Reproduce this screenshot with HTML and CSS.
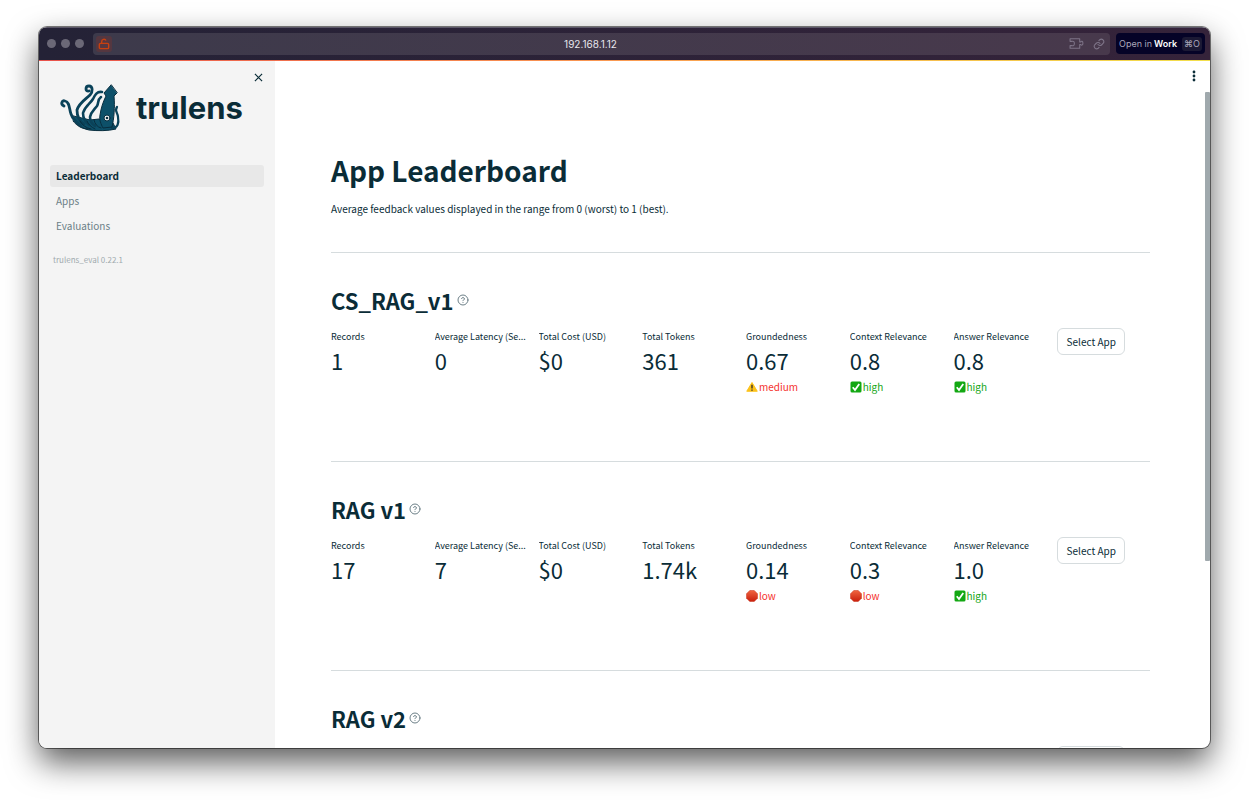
FILE: index.html
```html
<!DOCTYPE html>
<html lang="en">
<head>
<meta charset="utf-8">
<title>App Leaderboard</title>
<link rel="stylesheet" href="styles.css">
</head>
<body>
<svg class="defs" aria-hidden="true">
  <symbol id="help" viewBox="0 0 24 24"><g fill="none" stroke="currentColor" stroke-width="2" stroke-linecap="round" stroke-linejoin="round"><circle cx="12" cy="12" r="10"/><path d="M9.1 9a3 3 0 0 1 5.8 1c0 2-3 3-3 3M12 17v.1"/></g></symbol>
  <symbol id="check" viewBox="0 0 24 24"><rect x="1" y="1" width="22" height="22" rx="3" fill="#13a813"/><path d="M5.500 12.500l4.500 5.500L18.500 6" fill="none" stroke="#fff" stroke-width="3.600"/></symbol>
  <symbol id="warn" viewBox="0 0 24 24"><path d="M12 3L22.500 20.500h-21z" fill="#fcc21b" stroke="#fcc21b" stroke-width="2" stroke-linejoin="round"/><path d="M12 7.500v7.500M12 17v2.500" stroke="#3b3428" stroke-width="2.800"/></symbol>
  <symbol id="stop" viewBox="0 0 24 24"><defs><linearGradient id="red" x2="0" y2="1"><stop stop-color="#f0643f"/><stop offset="1" stop-color="#c91f0c"/></linearGradient></defs><path d="M7.500 1h9L23 7.500v9L16.500 23h-9L1 16.500v-9z" fill="url(#red)" stroke="#c8321c" stroke-width="1"/></symbol>
</svg>
<div class="window">
  <header class="titlebar">
    <div class="lights"><i></i><i></i><i></i></div>
    <div class="address">
      <span class="lock"><svg viewBox="0 0 24 24" width="14" height="14" fill="none" stroke="#c8400f" stroke-width="2.400"><rect x="4" y="11" width="16" height="9" rx="2"/><path d="M8 11V8a4 4 0 0 1 7.500-2"/></svg></span>
      <span class="host">192.168.1.12</span>
      <svg viewBox="0 0 28 24" width="15" height="13" fill="none" stroke="#7d7387" stroke-width="2" stroke-linejoin="round"><path d="M2 8V3h18v6h2c1-2 4-1.500 4 2.500s-3 4.500-4 2.500h-2v7H2v-5h3c4 1 5-1 5-4s-1-5-5-4z"/></svg>
      <svg viewBox="0 0 24 24" width="12" height="12" fill="none" stroke="#7d7387" stroke-width="2.200" stroke-linecap="round"><path d="M10 13a5 5 0 0 0 7.500.5l3-3a5 5 0 0 0-7-7l-1.700 1.700M14 11a5 5 0 0 0-7.500-.5l-3 3a5 5 0 0 0 7 7l1.700-1.700"/></svg>
    </div>
    <button class="open-in">Open in <b>Work</b><kbd>⌘O</kbd></button>
  </header>
  <div class="app">
    <aside class="sidebar">
      <button class="close" aria-label="Close sidebar"><svg viewBox="0 0 10 10" width="9" height="9" stroke="#0a2c37" stroke-width="1.300"><path d="M1 1l8 8M9 1L1 9"/></svg></button>
      <div class="brand">
        <svg viewBox="0 0 68 56" width="68" height="56" fill="none" stroke-linecap="round" stroke-linejoin="round">
          <path d="M16 38c2 7 8 12 17 14 9 1 19 1 27-1l-3-6-14-4-9 1-8-2z" fill="#0d5069" stroke="#082d3e" stroke-width="1"/>
          <g stroke="#0a4259">
            <path d="M8 28C4 26 6 22 9 23c5 1 4 8 6 13 2 6 6 9 10 12" stroke-width="2.800"/>
            <path d="M33 13c-4 1-4-5 0-5 4 0 4 6 1 9-4 4-11 8-13 15 0 6 2 11 7 14" stroke-width="2.800"/>
            <path d="M46 14c-5-1-7 3-9 7-3 5-8 7-10 14 0 5 2 9 6 12" stroke-width="2.600"/>
            <path d="M45 19c-4 3-2 6-4 9-3 4-6 6-7 11 0 4 2 7 5 9" stroke-width="2.600"/>
            <path d="M61 29c-3 4 1 6 1 10 1 6 0 11-6 11" stroke-width="2.200"/>
          </g>
          <path d="M55 7l-7 8 2 3c-3 6-5 12-6 19-1 5 1 9 3 13l9-1c2-8 3-20 2-31l3-3z" fill="#0d5069" stroke="#082d3e" stroke-width="1"/>
          <path d="M17 43c4 5 9 8 15 8M24 43c2 4 6 7 11 8M31 43c1 3 4 6 8 8M38 42c1 4 3 7 7 8" stroke="#082d3e" stroke-width="1"/>
          <circle cx="51" cy="40" r="3" fill="#f4f4f4" stroke="#082d3e" stroke-width="1"/><circle cx="51" cy="40" r="1.300" fill="#082d3e"/>
        </svg>
        <span>trulens</span>
      </div>
      <nav>
        <a href="#" class="current">Leaderboard</a>
        <a href="#">Apps</a>
        <a href="#">Evaluations</a>
      </nav>
      <p class="version">trulens_eval 0.22.1</p>
    </aside>
    <main>
      <button class="menu" aria-label="Main menu"><svg viewBox="0 0 4 12" width="4" height="12" fill="#0a2c37"><circle cx="2" cy="2" r="1.400"/><circle cx="2" cy="6" r="1.400"/><circle cx="2" cy="10" r="1.400"/></svg></button>
      <div class="scrollbar"></div>
      <h1>App Leaderboard</h1>
      <p class="intro">Average feedback values displayed in the range from 0 (worst) to 1 (best).</p>
      <section>
        <h2>CS_RAG_v1 <svg><use href="#help"/></svg></h2>
        <div class="metrics">
          <div class="metric"><span>Records</span><strong>1</strong></div>
          <div class="metric"><span>Average Latency (Se...</span><strong>0</strong></div>
          <div class="metric"><span>Total Cost (USD)</span><strong>$0</strong></div>
          <div class="metric"><span>Total Tokens</span><strong>361</strong></div>
          <div class="metric"><span>Groundedness</span><strong>0.67</strong><em class="bad"><svg><use href="#warn"/></svg>medium</em></div>
          <div class="metric"><span>Context Relevance</span><strong>0.8</strong><em class="good"><svg><use href="#check"/></svg>high</em></div>
          <div class="metric"><span>Answer Relevance</span><strong>0.8</strong><em class="good"><svg><use href="#check"/></svg>high</em></div>
          <div><button class="select">Select App</button></div>
        </div>
      </section>
      <section>
        <h2>RAG v1 <svg><use href="#help"/></svg></h2>
        <div class="metrics">
          <div class="metric"><span>Records</span><strong>17</strong></div>
          <div class="metric"><span>Average Latency (Se...</span><strong>7</strong></div>
          <div class="metric"><span>Total Cost (USD)</span><strong>$0</strong></div>
          <div class="metric"><span>Total Tokens</span><strong>1.74k</strong></div>
          <div class="metric"><span>Groundedness</span><strong>0.14</strong><em class="bad"><svg><use href="#stop"/></svg>low</em></div>
          <div class="metric"><span>Context Relevance</span><strong>0.3</strong><em class="bad"><svg><use href="#stop"/></svg>low</em></div>
          <div class="metric"><span>Answer Relevance</span><strong>1.0</strong><em class="good"><svg><use href="#check"/></svg>high</em></div>
          <div><button class="select">Select App</button></div>
        </div>
      </section>
      <section>
        <h2>RAG v2 <svg><use href="#help"/></svg></h2>
        <div class="metrics"><div class="action"><button class="select" aria-label="Select App"></button></div></div>
      </section>
    </main>
  </div>
</div>
</body>
</html>
```
FILE: styles.css
```css
* { box-sizing: border-box; }
body {
  margin: 0;
  height: 100vh;
  padding: 27px 39px 52px;
  background: #fff;
  color: #0a2c37;
  font: 10px/16px "Noto Sans CJK SC", "Noto Sans", sans-serif;
}
button { font: inherit; color: inherit; border: 0; background: none; padding: 0; }
h1, h2, p { margin: 0; }
.defs { position: absolute; width: 0; height: 0; }
.window {
  height: 100%;
  display: flex;
  flex-direction: column;
  overflow: hidden;
  border-radius: 8px;
  background: #fff;
  box-shadow: 0 0 0 1px rgba(0, 0, 0, .5), 0 14px 32px rgba(0, 0, 0, .65);
}
.titlebar {
  flex: none;
  height: 33px;
  display: flex;
  align-items: center;
  padding: 0 5px 1px 8px;
  background: linear-gradient(90deg, #242236, #35233a);
  border-top: 1px solid #5c5768;
  font-family: Inter, sans-serif;
}
.lights { display: flex; gap: 5px; margin-right: 9px; }
.lights i { width: 9px; height: 9px; border-radius: 50%; background: #6b6877; }
.address {
  flex: 1;
  height: 22px;
  display: flex;
  align-items: center;
  gap: 9px;
  padding: 0 5px 0 3px;
  border-radius: 4px;
  background: linear-gradient(90deg, #3d3a4b, #48394c);
}
.lock { width: 16px; height: 16px; display: grid; place-items: center; border-radius: 3px; background: #553740; }
.host { flex: 1; text-align: center; color: #e8e6ec; }
.open-in {
  height: 21px;
  display: flex;
  align-items: center;
  gap: 2px;
  margin-left: 6px;
  padding: 0 3px;
  border-radius: 4px;
  background: #050327;
  color: #aaa7ba;
  font-size: 9px;
}
.open-in b { color: #fff; font-weight: 600; }
.open-in kbd { margin-left: 3px; padding: 0 2px; border-radius: 3px; background: #1b1934; font: inherit; line-height: 14px; }
.app {
  flex: 1;
  min-height: 0;
  display: flex;
  border-top: 1px solid;
  border-image: linear-gradient(90deg, #e8514b, #fa9b52 50%, #f3e04b) 1;
}
.sidebar { position: relative; flex: none; width: 236px; padding: 17px 11px 16px; background: #f4f4f4; }
.close { position: absolute; top: 12px; right: 12px; width: 9px; height: 10px; display: grid; }
.brand { display: flex; align-items: center; margin: 0 0 31px 6px; height: 56px; }
.brand span { margin-left: 12px; padding-top: 4px; font: 700 31px/40px Inter, sans-serif; }
nav { display: grid; gap: 3px; }
nav a { height: 22px; padding: 0 6px; border-radius: 3px; color: #6c7f87; line-height: 22px; text-decoration: none; }
nav .current { background: #e8e8e8; color: #0a2c37; font-weight: 700; }
.version { margin: 15px 3px; color: #a0aaae; font-size: 8px; }
main { position: relative; flex: 1; min-width: 0; overflow: hidden; padding: 87px 60px 0 56px; }
.menu { position: absolute; top: 9px; right: 14px; width: 4px; height: 12px; display: grid; }
.scrollbar { position: absolute; top: 31px; right: 0; width: 5px; height: 469px; background: #a0a9ad; border-radius: 1px; }
h1 { font-size: 28px; line-height: 44px; font-weight: 700; }
.intro { margin-top: 9px; margin-bottom: 35px; }
section { height: 209px; border-top: 1px solid #d6dcde; padding-top: 30px; }
h2 { display: flex; align-items: center; gap: 3px; font-size: 22px; line-height: 34px; font-weight: 700; }
h2 svg { width: 12px; height: 12px; color: #6c7f87; }
.metrics { display: grid; grid-template-columns: repeat(8, minmax(0, 1fr)); gap: 11px; margin-top: 11px; }
.metric { display: flex; flex-direction: column; padding-top: 1px; }
.metric span { overflow: hidden; text-overflow: ellipsis; white-space: nowrap; font-size: 9px; }
.metric strong { font-size: 22px; line-height: 30px; font-weight: 400; }
.metric em { display: flex; align-items: center; gap: 1px; margin-top: 4px; font-style: normal; }
.metric em svg { width: 12px; height: 12px; }
.good { color: #14a514; }
.bad { color: #f5322d; }
.action { grid-column: 8; }
.select { min-width: 68px; height: 27px; padding: 0 8px; border: 1px solid #d6dcde; border-radius: 6px; background: #fff; white-space: nowrap; }
```
